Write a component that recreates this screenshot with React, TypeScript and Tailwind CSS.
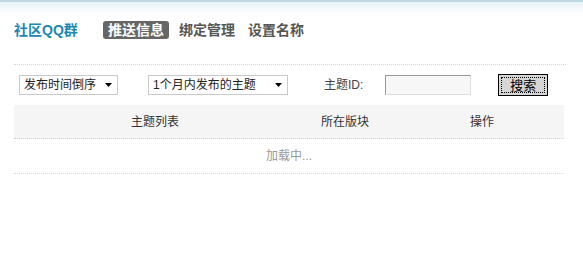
import React from 'react';

const FONT = "font-['Tahoma','Liberation_Sans','Noto_Sans_CJK_SC',sans-serif]";

function Caret() {
  return (
    <svg width="7" height="4" viewBox="0 0 7 4" className="shrink-0">
      <path d="M0 0h7L3.5 4z" fill="#000" />
    </svg>
  );
}

function FakeSelect({ label, width }: { label: string; width: string }) {
  return (
    <div
      className={`${width} h-[20px] flex items-center justify-between border border-[#c9c9c9] bg-white pl-[4px] pr-[5px] text-[12px] text-[#222]`}
    >
      <span className="leading-none">{label}</span>
      <Caret />
    </div>
  );
}

export default function App() {
  return (
    <div className={`w-[583px] h-[275px] bg-white ${FONT}`}>
      {/* Top strip */}
      <div className="h-[14px] border-t-2 border-[#bcd9e3] bg-gradient-to-b from-[#e8f2f8] to-white" />

      <div className="px-[14px]">
        {/* Header nav */}
        <div className="flex items-center h-[34px] pb-[2px]">
          <h1 className="text-[14px] font-bold text-[#1a88b3] w-[89px]">社区QQ群</h1>
          <div className="flex items-center text-[14px] font-bold">
            <span className="bg-[#666] text-white rounded-[3px] px-[5px] h-[18px] flex items-center">推送信息</span>
            <span className="text-[#555] ml-[10px]">绑定管理</span>
            <span className="text-[#555] ml-[13px]">设置名称</span>
          </div>
        </div>

        {/* Divider */}
        <div className="mt-[16px] w-[552px] border-t border-dotted border-[#d8d8d8]" />

        {/* Filters */}
        <div className="flex items-center h-[22px] mt-[9px] pl-[5px]">
          <FakeSelect label="发布时间倒序" width="w-[99px]" />
          <div className="w-[30px]" />
          <FakeSelect label="1个月内发布的主题" width="w-[140px]" />
          <span className="ml-[36px] text-[12px] text-[#444]">主题ID:</span>
          <div className="ml-[22px] w-[86px] h-[20px] border border-[#999] border-r-[#ddd] border-b-[#ddd] bg-[#f7f7f7]" />
          <button className="ml-[27px] w-[50px] h-[22px] border border-black bg-[#d6d6d6] p-[2px] text-[13px] text-black">
            <div className="h-full w-full border border-dotted border-black flex items-center justify-center leading-none">
              搜索
            </div>
          </button>
        </div>

        {/* Table */}
        <div className="mt-[9px] w-[550px]">
          <div className="flex items-center h-[34px] bg-[#f5f5f5] text-[12px] text-[#333] border-b border-dotted border-[#cfcfcf]">
            <div className="w-[282px] text-center">主题列表</div>
            <div className="w-[98px] text-center">所在版块</div>
            <div className="flex-1 text-center pl-[6px]">操作</div>
          </div>
          <div className="h-[35px] flex items-center justify-center text-[12px] text-[#999] border-b border-dotted border-[#d8d8d8]">
            加载中...
          </div>
        </div>
      </div>
    </div>
  );
}
